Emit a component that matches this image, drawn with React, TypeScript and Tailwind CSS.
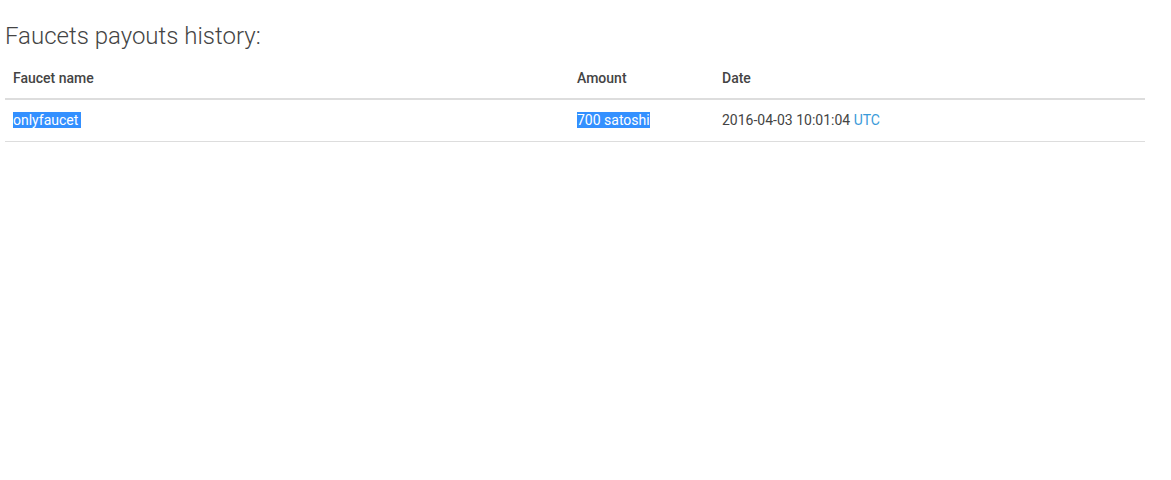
export default function App() {
  return (
    <div className="min-h-[480px] bg-white px-[5px] pt-[23px]" style={{ fontFamily: "Roboto, 'Liberation Sans', sans-serif" }}>
      <h3 className="text-[24px] font-light leading-[1.1] text-[#444444] mb-[10px]">Faucets payouts history:</h3>
      <table className="w-[1140px] border-collapse text-[14px] text-[#444444]">
        <thead>
          <tr className="border-b-2 border-[#dddddd]">
            <th className="text-left font-medium px-[8px] h-[40px] w-[564px] pb-[1px]">Faucet name</th>
            <th className="text-left font-medium px-[8px] h-[40px] w-[145px] pb-[1px]">Amount</th>
            <th className="text-left font-medium px-[8px] h-[40px] pb-[1px]">Date</th>
          </tr>
        </thead>
        <tbody>
          <tr className="border-b border-[#dddddd]">
            <td className="px-[8px] h-[42px] pb-[1px]">
              <span className="bg-[#3390ff] text-white pr-[3px]">onlyfaucet</span>
            </td>
            <td className="px-[8px] h-[42px] pb-[1px]">
              <span className="bg-[#3390ff] text-white">700 satoshi</span>
            </td>
            <td className="px-[8px] h-[42px] pb-[1px]">
              2016-04-03 10:01:04 <span className="text-[#3a9ad9]">UTC</span>
            </td>
          </tr>
        </tbody>
      </table>
    </div>
  );
}
